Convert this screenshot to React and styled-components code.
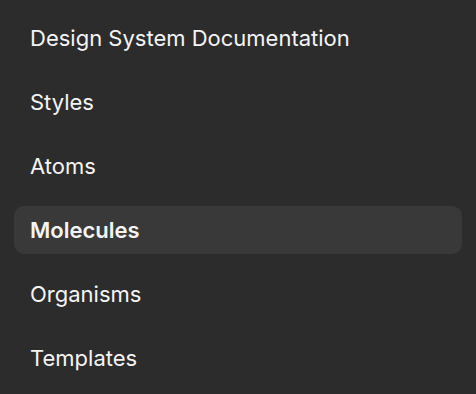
import React from 'react'
import styled, { createGlobalStyle } from 'styled-components'

const Global = createGlobalStyle`
  html, body {
    margin: 0;
    background: #2c2c2c;
  }
  body {
    font-family: Inter, "Noto Sans", sans-serif;
  }
`

const Nav = styled.nav`
  display: flex;
  flex-direction: column;
  gap: 16px;
  padding: 14px;
  min-height: 394px;
  box-sizing: border-box;
  background: #2c2c2c;
`

const Item = styled.div`
  height: 48px;
  display: flex;
  align-items: center;
  padding: 0 16px;
  border-radius: 10px;
  font-size: 22px;
  color: #f4f4f4;
  font-weight: ${p => (p.active ? 600 : 400)};
  background: ${p => (p.active ? '#393939' : 'transparent')};
`

const items = ['Design System Documentation', 'Styles', 'Atoms', 'Molecules', 'Organisms', 'Templates']

export default function App() {
  return (
    <>
      <Global />
      <Nav>
        {items.map(name => (
          <Item key={name} active={name === 'Molecules'}>{name}</Item>
        ))}
      </Nav>
    </>
  )
}
